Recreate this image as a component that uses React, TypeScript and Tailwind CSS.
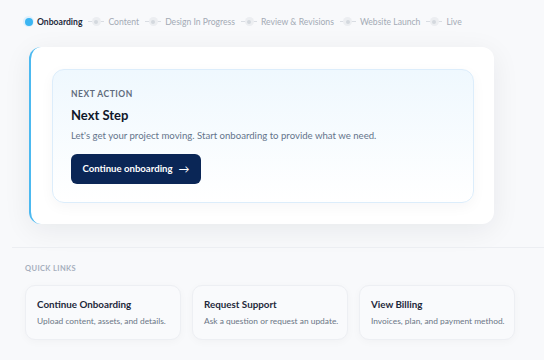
const steps = [
  "Content",
  "Design In Progress",
  "Review & Revisions",
  "Website Launch",
  "Live",
];

const links = [
  { title: "Continue Onboarding", desc: "Upload content, assets, and details." },
  { title: "Request Support", desc: "Ask a question or request an update." },
  { title: "View Billing", desc: "Invoices, plan, and payment method." },
];

function Stepper() {
  return (
    <div className="flex items-center pl-[23px] pt-[15px] h-[28px] text-[8.6px] leading-[12px]">
      <div className="flex items-center gap-[3px]">
        <span className="flex h-[11px] w-[11px] items-center justify-center rounded-full bg-[#dff1fd]">
          <span className="h-[8px] w-[8px] rounded-full bg-[#3bb5f2]" />
        </span>
        <span className="font-bold text-[#1e293b]">Onboarding</span>
      </div>
      {steps.map((s) => (
        <div key={s} className="flex items-center">
          <span className="relative ml-[6px] mr-[4px] flex h-[9px] w-[16px] items-center justify-center">
            <span className="absolute left-0 right-0 top-[4px] h-px bg-[#d9dde3]" />
            <span className="relative h-[9px] w-[9px] rounded-full bg-[#eceef1]" />
            <span className="absolute h-[4px] w-[4px] rounded-full bg-[#d4d8de]" />
          </span>
          <span className="text-[#a3aab5]">{s}</span>
        </div>
      ))}
    </div>
  );
}

function NextAction() {
  return (
    <div className="ml-[29px] mt-[19px] w-[465px] rounded-[12px] border-l-2 border-[#4cb9f0] bg-white pl-[21px] pr-[20px] pt-[22px] pb-[21px] shadow-[0_6px_28px_rgba(15,23,42,0.07)]">
      <div className="h-[134px] rounded-[12px] border border-[#dcedfb] bg-gradient-to-b from-[#eff8fe] to-white pl-[18px] pt-[18px] shadow-[0_4px_14px_rgba(15,23,42,0.04)]">
        <div className="text-[8.5px] font-bold leading-[12px] tracking-[0.06em] text-[#5f6b7c]">
          NEXT ACTION
        </div>
        <div className="mt-[5px] text-[13px] font-bold leading-[20px] text-[#0f172a]">
          Next Step
        </div>
        <div className="mt-[3px] text-[9.6px] leading-[16px] text-[#64748b]">
          Let's get your project moving. Start onboarding to provide what we need.
        </div>
        <button className="mt-[10px] flex h-[30px] w-[130px] items-center justify-center gap-[6px] rounded-[6px] bg-[#0a2656] text-[9.6px] font-bold text-white">
          <span>Continue onboarding</span>
          <span className="text-[11px] font-normal">→</span>
        </button>
      </div>
    </div>
  );
}

function QuickLinks() {
  return (
    <div className="ml-[12px] mt-[23px] border-t border-[#eceef2] pl-[13px] pt-[16px]">
      <div className="text-[7.5px] font-bold leading-[10px] tracking-[0.05em] text-[#a6afbd]">
        QUICK LINKS
      </div>
      <div className="mt-[11px] flex gap-[11px]">
        {links.map((l) => (
          <div
            key={l.title}
            className="h-[55px] w-[156px] rounded-[10px] border border-[#edeff3] bg-[#f9fafc] pl-[11px] pt-[11px] shadow-[0_2px_8px_rgba(15,23,42,0.03)]"
          >
            <div className="text-[9.8px] font-bold leading-[14px] text-[#1e293b]">
              {l.title}
            </div>
            <div className="mt-[4px] text-[8.4px] leading-[13px] text-[#6b7686]">
              {l.desc}
            </div>
          </div>
        ))}
      </div>
    </div>
  );
}

export default function App() {
  return (
    <div
      className="h-[360px] w-[544px] overflow-hidden bg-[#f8f9fb]"
      style={{ fontFamily: "Lato, 'Open Sans', sans-serif" }}
    >
      <Stepper />
      <NextAction />
      <QuickLinks />
    </div>
  );
}
